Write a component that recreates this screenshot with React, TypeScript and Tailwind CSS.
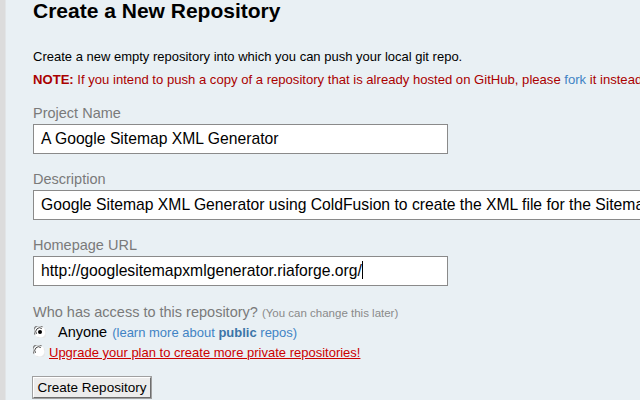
import React from 'react';

const Radio = ({ checked }: { checked?: boolean }) => (
  <svg width="12" height="12" viewBox="0 0 12 12" className="shrink-0">
    <circle cx="6" cy="6" r="5.5" fill="#fff" />
    <path d="M1.2 8.5 A5 5 0 0 1 8.5 1.2" stroke="#808080" strokeWidth="1.2" fill="none" />
    <path d="M2.5 7.8 A3.8 3.8 0 0 1 7.8 2.5" stroke="#404040" strokeWidth="1" fill="none" />
    <path d="M10.8 3.5 A5 5 0 0 1 3.5 10.8" stroke="#e8e8e8" strokeWidth="1.2" fill="none" />
    {checked && <circle cx="6" cy="6" r="2" fill="#000" />}
  </svg>
);

const Field = ({ label, value, wide, cursor }: { label: string; value: string; wide?: boolean; cursor?: boolean }) => (
  <div className="mt-[17px]">
    <div className="text-[14.5px] leading-[17px] text-[#7a7a7a]">{label}</div>
    <div
      className={`mt-[2px] h-[30px] bg-white border border-[#8a8a8a] px-[7px] text-[15.7px] leading-[28px] text-black whitespace-nowrap overflow-hidden ${wide ? 'w-[720px]' : 'w-[415px]'}`}
    >
      {value}
      {cursor && <span className="inline-block w-px h-[18px] bg-black align-[-3px]"></span>}
    </div>
  </div>
);

export default function App() {
  return (
    <div className="w-[640px] h-[400px] overflow-hidden flex bg-[#e9f0f4]" style={{ fontFamily: '"Liberation Sans", Arial, sans-serif' }}>
      <div className="w-[6px] shrink-0 bg-[#dcdcdc] border-r border-[#e2e5e7]"></div>
      <div className="pl-[27px] min-w-0 flex-1">
        <h1 className="text-[21px] leading-[21px] font-bold text-black whitespace-nowrap">Create a New Repository</h1>

        <p className="mt-[28px] text-[13px] leading-[16px] text-black whitespace-nowrap">
          Create a new empty repository into which you can push your local git repo.
        </p>
        <p className="mt-[7px] text-[13.1px] leading-[16px] text-[#aa0000] whitespace-nowrap">
          <span className="font-bold">NOTE:</span> If you intend to push a copy of a repository that is already hosted on GitHub, please{' '}
          <span className="text-[#4183c4]">fork</span> it instead.
        </p>

        <div className="mt-[3px]">
          <Field label="Project Name" value="A Google Sitemap XML Generator" />
          <Field
            label="Description"
            value="Google Sitemap XML Generator using ColdFusion to create the XML file for the Sitemap"
            wide
          />
          <Field label="Homepage URL" value="http://googlesitemapxmlgenerator.riaforge.org/" cursor />
        </div>

        <div className="mt-[18px] text-[14.5px] leading-[17px] text-[#7a7a7a] whitespace-nowrap">
          Who has access to this repository? <span className="text-[11.5px] text-[#8a8a8a]">(You can change this later)</span>
        </div>
        <div className="mt-[2px] flex items-center leading-[17px] whitespace-nowrap">
          <div className="ml-[1px] mt-[-1px]">
            <Radio checked />
          </div>
          <span className="ml-[12px] text-[14.5px] text-black">Anyone</span>
          <span className="ml-[5px] text-[13px] text-[#4183c4]">
            (learn more about <span className="font-bold text-[#3b74a8]">public</span> repos)
          </span>
        </div>
        <div className="mt-[2px] flex items-center leading-[20px] whitespace-nowrap">
          <div className="mt-[-4px]">
            <Radio />
          </div>
          <span className="ml-[4px] text-[13px] text-[#cc0000] underline">
            Upgrade your plan to create more private repositories!
          </span>
        </div>

        <button className="mt-[14px] h-[21px] w-[118px] bg-[#ececec] border border-t-white border-l-white border-r-[#6e6e6e] border-b-[#6e6e6e] shadow-[0_0_0_1px_#a0a0a0] text-[13.5px] leading-[19px] text-black text-center">
          Create Repository
        </button>
      </div>
    </div>
  );
}
